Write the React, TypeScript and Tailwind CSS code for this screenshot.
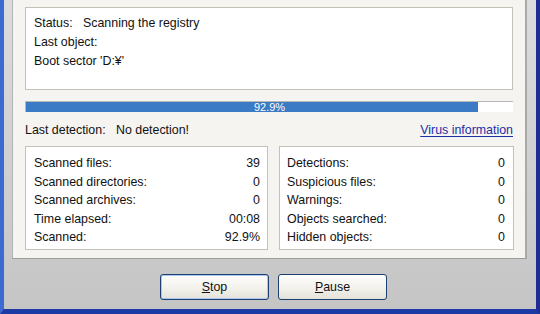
import React from "react";

const font = { fontFamily: '"Liberation Sans", Arial, sans-serif' };

const leftStats: [string, string][] = [
  ["Scanned files:", "39"],
  ["Scanned directories:", "0"],
  ["Scanned archives:", "0"],
  ["Time elapsed:", "00:08"],
  ["Scanned:", "92.9%"],
];

const rightStats: [string, string][] = [
  ["Detections:", "0"],
  ["Suspicious files:", "0"],
  ["Warnings:", "0"],
  ["Objects searched:", "0"],
  ["Hidden objects:", "0"],
];

function StatBox({ rows, className }: { rows: [string, string][]; className: string }) {
  return (
    <div className={`h-[104px] border border-[#c4c1b6] bg-white pt-[7px] ${className}`}>
      {rows.map(([label, value]) => (
        <div key={label} className="flex justify-between leading-[18.5px]">
          <span>{label}</span>
          <span>{value}</span>
        </div>
      ))}
    </div>
  );
}

function XpButton({ hot, rest, focused }: { hot: string; rest: string; focused?: boolean }) {
  return (
    <button
      className={`flex h-[26px] w-[109px] items-center justify-center rounded-[3px] border border-[#1d3f72] bg-gradient-to-b from-[#fdfdfb] via-[#f4f3ee] to-[#e4e2d8] text-[12.4px] text-[#111] ${
        focused ? "shadow-[inset_0_0_0_1px_#a9c7ee]" : ""
      }`}
    >
      <span>
        <span className="underline underline-offset-1">{hot}</span>
        {rest}
      </span>
    </button>
  );
}

export default function App() {
  return (
    <div
      style={font}
      className="flex h-[314px] w-[540px] flex-col border-b-[5px] border-l-4 border-r-4 border-b-[#1d3aa4] border-l-[#3c69d2] border-r-[#1f2c92] bg-gradient-to-b from-[#dcdcdc] to-[#c5c5c5] text-[12.4px] text-[#111]"
    >
      <div className="pl-[8px] pr-[9px]">
        <div className="h-[259px] border-b border-l border-r-2 border-b-[#9c9c9c] border-l-[#b4b4b4] border-r-[#a9a9a9] bg-[#f5f4f1] pl-[12px] pr-[12px] pt-[7px]">
          <div className="h-[83px] border border-[#c4c1b6] bg-white pl-[8px] pt-[6px] leading-[19px]">
            <div>
              <span className="inline-block w-[49px]">Status:</span>
              Scanning the registry
            </div>
            <div>Last object:</div>
            <div>Boot sector 'D:¥'</div>
          </div>

          <div className="relative mt-[11px] flex h-[11px] border-l border-t border-[#b8b8b8] bg-white">
            <div className="h-full w-[92.9%] bg-[#3b7bc6]" />
            <span className="absolute inset-0 flex items-center justify-center text-[11px] leading-none text-white">
              92.9%
            </span>
          </div>

          <div className="mt-[9px] flex justify-between leading-[18px]">
            <div>
              <span className="inline-block w-[91px]">Last detection:</span>
              No detection!
            </div>
            <span className="text-[#1b2fa8] underline underline-offset-2">Virus information</span>
          </div>

          <div className="mt-[7px] grid grid-cols-[243px_235px] gap-[11px]">
            <StatBox rows={leftStats} className="pl-[8px] pr-[7px]" />
            <StatBox rows={rightStats} className="pl-[7px] pr-[8px]" />
          </div>
        </div>
      </div>

      <div className="mt-[15px] flex gap-[9px] pl-[156px]">
        <XpButton hot="S" rest="top" focused />
        <XpButton hot="P" rest="ause" />
      </div>
    </div>
  );
}
